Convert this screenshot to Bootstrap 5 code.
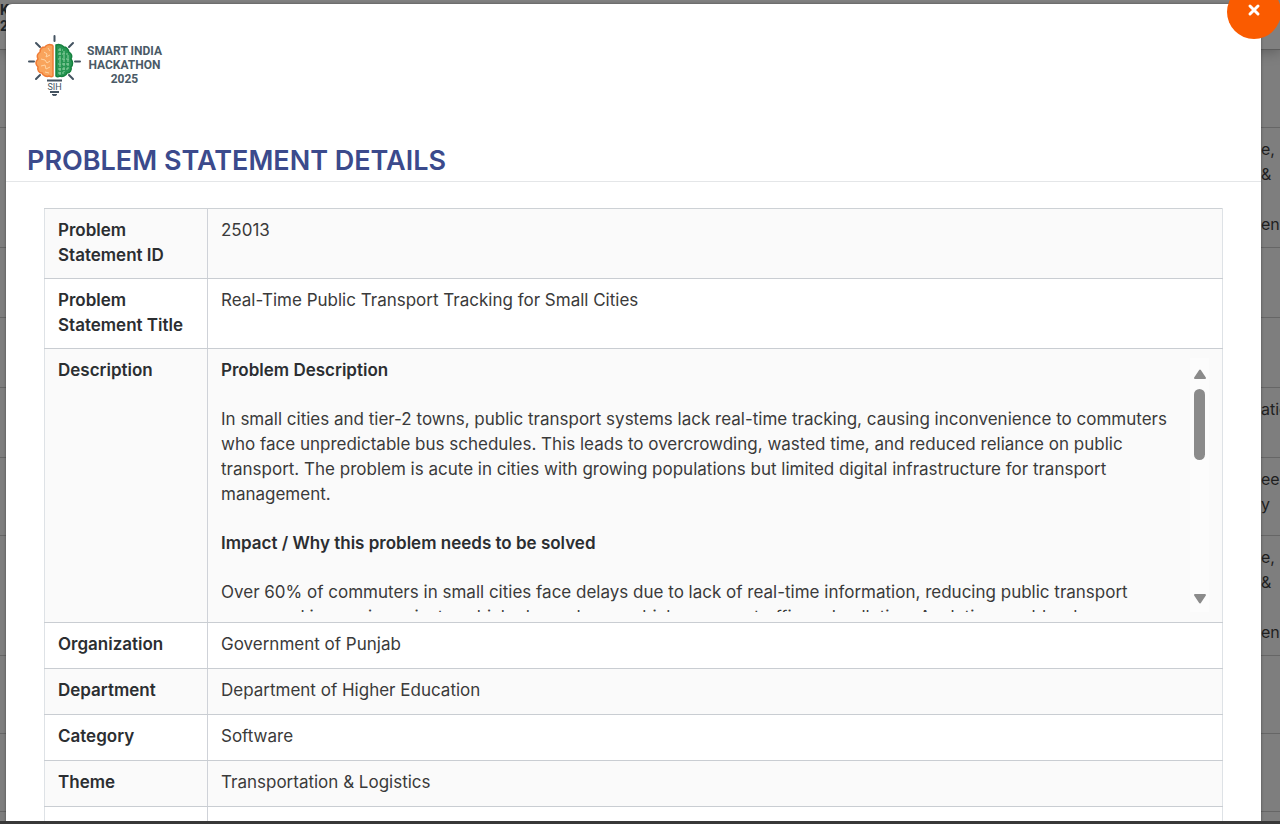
<!DOCTYPE html>
<html lang="en">
<head>
<meta charset="utf-8">
<meta name="viewport" content="width=device-width, initial-scale=1">
<title>Problem Statement Details</title>
<link href="https://cdn.jsdelivr.net/npm/bootstrap@5.3.0/dist/css/bootstrap.min.css" rel="stylesheet">
<style>
  body { font-family: Inter, "Open Sans", sans-serif; font-size: 17px; line-height: 25px; color: #3a3a3a; background: #7e7e7e; }
  .viewport { height: 100vh; border-bottom: 3px solid #383838; }

  /* dimmed page behind the dialog */
  .page-behind { inset: 0; color: #1f1f1f; }
  .page-head { height: 50px; padding-top: 2px; background: #808080; border-bottom: 1px solid #5c5c5c; box-shadow: 0 2px 12px #00000040; font: 700 14px/16px Roboto, sans-serif; color: #20262b; }
  .list-line { border-bottom: 1px solid #666; height: 70px; padding-top: 9px; }
  .line-3 { height: 78px; }
  .line-5 { height: 120px; }
  .edge-text { width: 19px; font-size: 16px; white-space: nowrap; overflow: hidden; }
  .edge-text div { height: 25px; }

  /* dialog */
  .dialog { margin: 4px 19px 0 6px; border-radius: 6px 6px 0 0; box-shadow: 0 0 3px #0006; }
  .dialog-head { padding: 30px 21px 0; border-bottom: 1px solid #e4e6e8; }
  .dialog-head h1 { font-size: 27px; line-height: 30px; font-weight: 600; color: #3b4a8c; margin: 50px 0 5px; }
  .brand-text { font: 700 12px/14px Roboto, sans-serif; color: #4a5a66; }
  .close-round { width: 54px; height: 54px; top: -19px; right: -20px; background: #fa5b00; }
  .close-round:hover { background: #e05200; }

  .dialog-body { padding: 26px 38px 0; }
  .details { border: 1px solid #dee2e6; border-top-color: #cdd1d5; }
  .details tr { height: 46px; }
  .details th, .details td { padding: 9px 13px 10px; border-bottom: 1px solid #c9cdd2; vertical-align: top; }
  .details th { width: 163px; border-right: 1px solid #cfd2d8; font-weight: 600; color: #2b2e31; }
  .details tr:nth-child(odd) { background: #fafafa; }
  .scroll-text { height: 254px; overflow-y: auto; scrollbar-width: none; }
  .scroll-text::-webkit-scrollbar { display: none; }
  .scroll-text p { margin-bottom: 24px; }
  .scroll-text strong { font-weight: 600; color: #2b2e31; }
  .scroll-bar { width: 19px; background: #fcfcfc; padding: 11px 0 8px; }
  .scroll-thumb { width: 11px; height: 71px; margin-top: 9px; background: #8b8b8b; }
</style>
</head>
<body>
<div class="viewport position-relative overflow-hidden">
  <div class="page-behind position-absolute" aria-hidden="true">
    <div class="page-head overflow-hidden">K<br>20</div>
    <div class="list-line line-3"></div>
    <div class="list-line line-5 d-flex justify-content-end"><div class="edge-text"><div>e,</div><div>&amp;</div><div></div><div>en</div></div></div>
    <div class="list-line"></div>
    <div class="list-line"></div>
    <div class="list-line d-flex justify-content-end"><div class="edge-text"><div>atic</div></div></div>
    <div class="list-line line-3 d-flex justify-content-end"><div class="edge-text"><div>ee</div><div>y</div></div></div>
    <div class="list-line line-5 d-flex justify-content-end"><div class="edge-text"><div>e,</div><div>&amp;</div><div></div><div>en</div></div></div>
    <div class="list-line line-3"></div>
    <div class="list-line line-3"></div>
  </div>

  <main class="dialog bg-white position-relative" role="dialog" aria-labelledby="dialog-title">
    <header class="dialog-head">
      <div class="d-flex align-items-center">
        <svg width="56" height="62" viewBox="0 0 56 62" role="img" aria-label="SIH">
          <g stroke="#445361" stroke-width="2" stroke-linecap="round">
            <path d="M27.500 2v5M9 9l4 4M46 9l-4 4M2 27.500h5M48 27.500h5M9 45l4-4M46 45l-4-4"/>
          </g>
          <path d="M25 11c-3-1-6 0-7 2-3 0-5 2-5 5-3 2-3 5-2 7-3 3-2 6 0 8-1 3 1 6 4 6 1 3 5 4 7 3 2 1 3 1 4 0V12z" fill="#f9a45c" stroke="#f07b35" stroke-width="1.500"/>
          <path d="M17 18l3 2-1 3 4-2M14 25l4 1 2 3 3-2M14 32l4-1 1 4 4-2M21 14l2 3M18 38l4 1" fill="none" stroke="#ffd4a4" stroke-width="1"/>
          <path d="M29 11c3-1 6 0 8 2 3 0 4 2 5 5 3 2 3 5 2 7 2 3 2 6 0 8 1 3-1 6-4 6-1 3-5 4-7 3-2 1-3 1-4 0z" fill="#279653" stroke="#16813e" stroke-width="1.500"/>
          <path d="M31 16h5M31 20h10M31 25h12M31 30h12M31 35h10M31 39h6M33 14v27M37 17v21M41 21v14" fill="none" stroke="#8ed0a2" stroke-width="1" stroke-dasharray="3 1"/>
          <path d="M20 46.500h15M23 58h9" stroke="#445361" stroke-width="2"/>
          <path d="M25 60.500h5l-2.500 1.500z" fill="#445361" stroke="#445361"/>
          <text x="27.500" y="55.500" text-anchor="middle" font-family="Roboto, sans-serif" font-size="9" fill="#445361">SIH</text>
        </svg>
        <div class="brand-text text-center ms-1">SMART INDIA<br>HACKATHON<br>2025</div>
      </div>
      <h1 id="dialog-title">PROBLEM STATEMENT DETAILS</h1>
    </header>

    <button type="button" class="close-round btn rounded-circle border-0 p-0 position-absolute" aria-label="Close">
      <svg class="d-block mx-auto mb-1" width="14" height="14" viewBox="0 0 14 14"><path d="M3 3l8 8M11 3l-8 8" stroke="#fff" stroke-width="3" stroke-linecap="round"/></svg>
    </button>

    <div class="dialog-body">
      <table class="details w-100">
        <tbody>
          <tr><th scope="row">Problem Statement ID</th><td>25013</td></tr>
          <tr><th scope="row">Problem Statement Title</th><td>Real-Time Public Transport Tracking for Small Cities</td></tr>
          <tr>
            <th scope="row">Description</th>
            <td>
              <div class="d-flex">
                <div class="scroll-text flex-fill" tabindex="0">
                  <p><strong>Problem Description</strong></p>
                  <p>In small cities and tier-2 towns, public transport systems lack real-time tracking, causing inconvenience to commuters who face unpredictable bus schedules. This leads to overcrowding, wasted time, and reduced reliance on public transport. The problem is acute in cities with growing populations but limited digital infrastructure for transport management.</p>
                  <p><strong>Impact / Why this problem needs to be solved</strong></p>
                  <p>Over 60% of commuters in small cities face delays due to lack of real-time information, reducing public transport<br>usage and increasing private vehicle dependency, which worsens traffic and pollution. Analytics would reduce</p>
                </div>
                <div class="scroll-bar d-flex flex-column align-items-center flex-shrink-0">
                  <svg width="14" height="11" viewBox="0 0 14 11"><path d="M7 1.500L12 9H2z" fill="#8b8b8b" stroke="#8b8b8b" stroke-width="2" stroke-linejoin="round"/></svg>
                  <div class="scroll-thumb rounded-pill"></div>
                  <svg class="mt-auto" width="14" height="11" viewBox="0 0 14 11"><path d="M7 9.500L12 2H2z" fill="#8b8b8b" stroke="#8b8b8b" stroke-width="2" stroke-linejoin="round"/></svg>
                </div>
              </div>
            </td>
          </tr>
          <tr><th scope="row">Organization</th><td>Government of Punjab</td></tr>
          <tr><th scope="row">Department</th><td>Department of Higher Education</td></tr>
          <tr><th scope="row">Category</th><td>Software</td></tr>
          <tr><th scope="row">Theme</th><td>Transportation &amp; Logistics</td></tr>
          <tr><th scope="row"></th><td></td></tr>
        </tbody>
      </table>
    </div>
  </main>
</div>
<script src="https://cdn.jsdelivr.net/npm/bootstrap@5.3.0/dist/js/bootstrap.bundle.min.js"></script>
</body>
</html>
